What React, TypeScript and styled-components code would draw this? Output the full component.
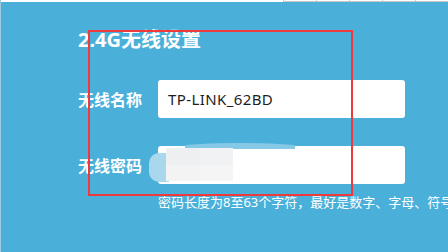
import React from 'react';
import styled, { createGlobalStyle } from 'styled-components';

const GlobalStyle = createGlobalStyle`
  html, body {
    margin: 0;
    padding: 0;
  }
  body {
    font-family: "Noto Sans", "Noto Sans CJK SC", sans-serif;
  }
`;

const Page = styled.div`
  position: relative;
  width: 448px;
  height: 252px;
  overflow: hidden;
  background: #4bb0d9;
  box-sizing: border-box;
  border-left: 1px solid #9fcbe0;
`;

const TopBar = styled.div`
  display: flex;
  height: 2px;
`;

const TopBlank = styled.div`
  width: 282px;
  background: #ffffff;
`;

const TopCells = styled.div`
  flex: 1;
  background-color: #ffffff;
  border-bottom: 1px solid #c8c8c8;
  background-image: repeating-linear-gradient(
    to right,
    #c8c8c8 0,
    #c8c8c8 1px,
    transparent 1px,
    transparent 33px
  );
`;

const Content = styled.div`
  padding: 24px 0 0 77px;
  display: flex;
  flex-direction: column;
`;

const Title = styled.h2`
  margin: 0;
  font-size: 20px;
  line-height: 28px;
  font-weight: 700;
  color: #ffffff;
`;

const Row = styled.div<{ $gap: number }>`
  display: flex;
  align-items: center;
  height: 38px;
  margin-top: ${(p) => p.$gap}px;
`;

const Label = styled.label`
  width: 80px;
  font-size: 16px;
  font-weight: 700;
  color: #ffffff;
  white-space: nowrap;
`;

const Field = styled.input`
  width: 247px;
  height: 38px;
  box-sizing: border-box;
  border: none;
  border-radius: 3px;
  background: #ffffff;
  padding: 0 0 0 10px;
  font-family: "Noto Sans", "Noto Sans CJK SC", sans-serif;
  font-size: 15px;
  letter-spacing: 0.4px;
  color: #1e1e1e;
  outline: none;
`;

const Hint = styled.div`
  margin: 9px 0 0 80px;
  font-size: 13px;
  line-height: 18px;
  color: #ffffff;
  white-space: nowrap;
`;

// blur smudge the screenshot author painted over the password
const Smudge = styled.div`
  position: absolute;
  left: 148px;
  top: 143px;
  width: 150px;
  height: 42px;
`;

const SmudgeTop = styled.div`
  position: absolute;
  left: 36px;
  top: 0;
  width: 110px;
  height: 6px;
  border-radius: 50% 50% 0 0;
  background: #86c9e6;
`;

const SmudgePill = styled.div`
  position: absolute;
  left: 0;
  top: 10px;
  width: 20px;
  height: 29px;
  border-radius: 10px 0 0 10px;
  background: #a9d8ed;
`;

const SmudgeBlock = styled.div`
  position: absolute;
  left: 17px;
  top: 5px;
  width: 67px;
  height: 33px;
  display: grid;
  grid-template-columns: 1fr 1fr;
  grid-template-rows: 1fr 1fr;
`;

const Tile = styled.div<{ $c: string }>`
  background: ${(p) => p.$c};
`;

const Marker = styled.div`
  position: absolute;
  left: 87px;
  top: 30px;
  width: 265px;
  height: 166px;
  box-sizing: border-box;
  border: 2px solid #f0393a;
  pointer-events: none;
`;

export default function App() {
  return (
    <>
      <GlobalStyle />
      <Page>
        <TopBar>
          <TopBlank />
          <TopCells />
        </TopBar>
        <Content>
          <Title>2.4G无线设置</Title>
          <Row $gap={26}>
            <Label>无线名称</Label>
            <Field defaultValue="TP-LINK_62BD" />
          </Row>
          <Row $gap={28}>
            <Label>无线密码</Label>
            <Field defaultValue="" />
          </Row>
          <Hint>密码长度为8至63个字符，最好是数字、字母、符号</Hint>
        </Content>
        <Smudge>
          <SmudgeTop />
          <SmudgePill />
          <SmudgeBlock>
            <Tile $c="#eeeff0" />
            <Tile $c="#f1f2f3" />
            <Tile $c="#f3f3f4" />
            <Tile $c="#f5f5f6" />
          </SmudgeBlock>
        </Smudge>
        <Marker />
      </Page>
    </>
  );
}
